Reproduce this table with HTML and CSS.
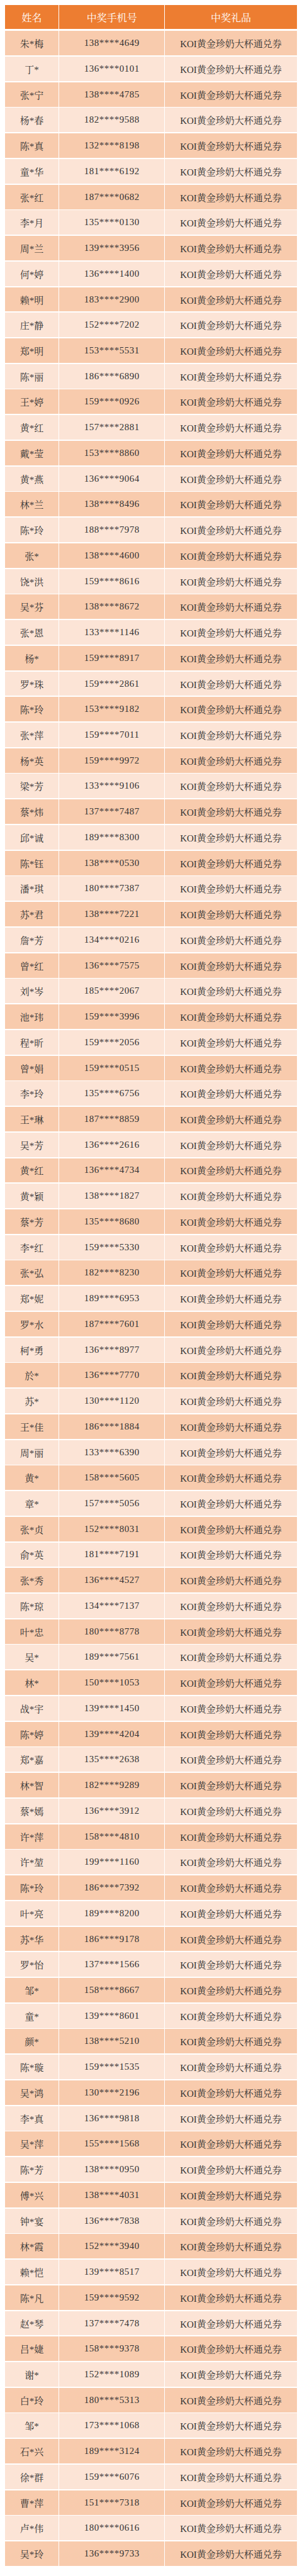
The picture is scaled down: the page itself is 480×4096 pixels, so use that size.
FILE: index.html
```html
<!DOCTYPE html>
<html lang="zh-CN">
<head>
<meta charset="utf-8">
<title>中奖名单</title>
<link rel="stylesheet" href="styles.css">
</head>
<body>
<div class="sheet">
<div class="table">
<div class="head"><div class="cell">姓名</div><div class="cell">中奖手机号</div><div class="cell">中奖礼品</div></div>
<div class="row"><div class="cell name">朱*梅</div><div class="cell phone">138****4649</div><div class="cell gift">KOI黄金珍奶大杯通兑券</div></div>
<div class="row"><div class="cell name">丁*</div><div class="cell phone">136****0101</div><div class="cell gift">KOI黄金珍奶大杯通兑券</div></div>
<div class="row"><div class="cell name">张*宁</div><div class="cell phone">138****4785</div><div class="cell gift">KOI黄金珍奶大杯通兑券</div></div>
<div class="row"><div class="cell name">杨*春</div><div class="cell phone">182****9588</div><div class="cell gift">KOI黄金珍奶大杯通兑券</div></div>
<div class="row"><div class="cell name">陈*真</div><div class="cell phone">132****8198</div><div class="cell gift">KOI黄金珍奶大杯通兑券</div></div>
<div class="row"><div class="cell name">童*华</div><div class="cell phone">181****6192</div><div class="cell gift">KOI黄金珍奶大杯通兑券</div></div>
<div class="row"><div class="cell name">张*红</div><div class="cell phone">187****0682</div><div class="cell gift">KOI黄金珍奶大杯通兑券</div></div>
<div class="row"><div class="cell name">李*月</div><div class="cell phone">135****0130</div><div class="cell gift">KOI黄金珍奶大杯通兑券</div></div>
<div class="row"><div class="cell name">周*兰</div><div class="cell phone">139****3956</div><div class="cell gift">KOI黄金珍奶大杯通兑券</div></div>
<div class="row"><div class="cell name">何*婷</div><div class="cell phone">136****1400</div><div class="cell gift">KOI黄金珍奶大杯通兑券</div></div>
<div class="row"><div class="cell name">赖*明</div><div class="cell phone">183****2900</div><div class="cell gift">KOI黄金珍奶大杯通兑券</div></div>
<div class="row"><div class="cell name">庄*静</div><div class="cell phone">152****7202</div><div class="cell gift">KOI黄金珍奶大杯通兑券</div></div>
<div class="row"><div class="cell name">郑*明</div><div class="cell phone">153****5531</div><div class="cell gift">KOI黄金珍奶大杯通兑券</div></div>
<div class="row"><div class="cell name">陈*丽</div><div class="cell phone">186****6890</div><div class="cell gift">KOI黄金珍奶大杯通兑券</div></div>
<div class="row"><div class="cell name">王*婷</div><div class="cell phone">159****0926</div><div class="cell gift">KOI黄金珍奶大杯通兑券</div></div>
<div class="row"><div class="cell name">黄*红</div><div class="cell phone">157****2881</div><div class="cell gift">KOI黄金珍奶大杯通兑券</div></div>
<div class="row"><div class="cell name">戴*莹</div><div class="cell phone">153****8860</div><div class="cell gift">KOI黄金珍奶大杯通兑券</div></div>
<div class="row"><div class="cell name">黄*燕</div><div class="cell phone">136****9064</div><div class="cell gift">KOI黄金珍奶大杯通兑券</div></div>
<div class="row"><div class="cell name">林*兰</div><div class="cell phone">138****8496</div><div class="cell gift">KOI黄金珍奶大杯通兑券</div></div>
<div class="row"><div class="cell name">陈*玲</div><div class="cell phone">188****7978</div><div class="cell gift">KOI黄金珍奶大杯通兑券</div></div>
<div class="row"><div class="cell name">张*</div><div class="cell phone">138****4600</div><div class="cell gift">KOI黄金珍奶大杯通兑券</div></div>
<div class="row"><div class="cell name">饶*洪</div><div class="cell phone">159****8616</div><div class="cell gift">KOI黄金珍奶大杯通兑券</div></div>
<div class="row"><div class="cell name">吴*芬</div><div class="cell phone">138****8672</div><div class="cell gift">KOI黄金珍奶大杯通兑券</div></div>
<div class="row"><div class="cell name">张*恩</div><div class="cell phone">133****1146</div><div class="cell gift">KOI黄金珍奶大杯通兑券</div></div>
<div class="row"><div class="cell name">杨*</div><div class="cell phone">159****8917</div><div class="cell gift">KOI黄金珍奶大杯通兑券</div></div>
<div class="row"><div class="cell name">罗*珠</div><div class="cell phone">159****2861</div><div class="cell gift">KOI黄金珍奶大杯通兑券</div></div>
<div class="row"><div class="cell name">陈*玲</div><div class="cell phone">153****9182</div><div class="cell gift">KOI黄金珍奶大杯通兑券</div></div>
<div class="row"><div class="cell name">张*萍</div><div class="cell phone">159****7011</div><div class="cell gift">KOI黄金珍奶大杯通兑券</div></div>
<div class="row"><div class="cell name">杨*英</div><div class="cell phone">159****9972</div><div class="cell gift">KOI黄金珍奶大杯通兑券</div></div>
<div class="row"><div class="cell name">梁*芳</div><div class="cell phone">133****9106</div><div class="cell gift">KOI黄金珍奶大杯通兑券</div></div>
<div class="row"><div class="cell name">蔡*炜</div><div class="cell phone">137****7487</div><div class="cell gift">KOI黄金珍奶大杯通兑券</div></div>
<div class="row"><div class="cell name">邱*诚</div><div class="cell phone">189****8300</div><div class="cell gift">KOI黄金珍奶大杯通兑券</div></div>
<div class="row"><div class="cell name">陈*钰</div><div class="cell phone">138****0530</div><div class="cell gift">KOI黄金珍奶大杯通兑券</div></div>
<div class="row"><div class="cell name">潘*琪</div><div class="cell phone">180****7387</div><div class="cell gift">KOI黄金珍奶大杯通兑券</div></div>
<div class="row"><div class="cell name">苏*君</div><div class="cell phone">138****7221</div><div class="cell gift">KOI黄金珍奶大杯通兑券</div></div>
<div class="row"><div class="cell name">詹*芳</div><div class="cell phone">134****0216</div><div class="cell gift">KOI黄金珍奶大杯通兑券</div></div>
<div class="row"><div class="cell name">曾*红</div><div class="cell phone">136****7575</div><div class="cell gift">KOI黄金珍奶大杯通兑券</div></div>
<div class="row"><div class="cell name">刘*岑</div><div class="cell phone">185****2067</div><div class="cell gift">KOI黄金珍奶大杯通兑券</div></div>
<div class="row"><div class="cell name">池*玮</div><div class="cell phone">159****3996</div><div class="cell gift">KOI黄金珍奶大杯通兑券</div></div>
<div class="row"><div class="cell name">程*昕</div><div class="cell phone">159****2056</div><div class="cell gift">KOI黄金珍奶大杯通兑券</div></div>
<div class="row"><div class="cell name">曾*娟</div><div class="cell phone">159****0515</div><div class="cell gift">KOI黄金珍奶大杯通兑券</div></div>
<div class="row"><div class="cell name">李*玲</div><div class="cell phone">135****6756</div><div class="cell gift">KOI黄金珍奶大杯通兑券</div></div>
<div class="row"><div class="cell name">王*琳</div><div class="cell phone">187****8859</div><div class="cell gift">KOI黄金珍奶大杯通兑券</div></div>
<div class="row"><div class="cell name">吴*芳</div><div class="cell phone">136****2616</div><div class="cell gift">KOI黄金珍奶大杯通兑券</div></div>
<div class="row"><div class="cell name">黄*红</div><div class="cell phone">136****4734</div><div class="cell gift">KOI黄金珍奶大杯通兑券</div></div>
<div class="row"><div class="cell name">黄*颖</div><div class="cell phone">138****1827</div><div class="cell gift">KOI黄金珍奶大杯通兑券</div></div>
<div class="row"><div class="cell name">蔡*芳</div><div class="cell phone">135****8680</div><div class="cell gift">KOI黄金珍奶大杯通兑券</div></div>
<div class="row"><div class="cell name">李*红</div><div class="cell phone">159****5330</div><div class="cell gift">KOI黄金珍奶大杯通兑券</div></div>
<div class="row"><div class="cell name">张*弘</div><div class="cell phone">182****8230</div><div class="cell gift">KOI黄金珍奶大杯通兑券</div></div>
<div class="row"><div class="cell name">郑*妮</div><div class="cell phone">189****6953</div><div class="cell gift">KOI黄金珍奶大杯通兑券</div></div>
<div class="row"><div class="cell name">罗*水</div><div class="cell phone">187****7601</div><div class="cell gift">KOI黄金珍奶大杯通兑券</div></div>
<div class="row"><div class="cell name">柯*勇</div><div class="cell phone">136****8977</div><div class="cell gift">KOI黄金珍奶大杯通兑券</div></div>
<div class="row"><div class="cell name">於*</div><div class="cell phone">136****7770</div><div class="cell gift">KOI黄金珍奶大杯通兑券</div></div>
<div class="row"><div class="cell name">苏*</div><div class="cell phone">130****1120</div><div class="cell gift">KOI黄金珍奶大杯通兑券</div></div>
<div class="row"><div class="cell name">王*佳</div><div class="cell phone">186****1884</div><div class="cell gift">KOI黄金珍奶大杯通兑券</div></div>
<div class="row"><div class="cell name">周*丽</div><div class="cell phone">133****6390</div><div class="cell gift">KOI黄金珍奶大杯通兑券</div></div>
<div class="row"><div class="cell name">黄*</div><div class="cell phone">158****5605</div><div class="cell gift">KOI黄金珍奶大杯通兑券</div></div>
<div class="row"><div class="cell name">章*</div><div class="cell phone">157****5056</div><div class="cell gift">KOI黄金珍奶大杯通兑券</div></div>
<div class="row"><div class="cell name">张*贞</div><div class="cell phone">152****8031</div><div class="cell gift">KOI黄金珍奶大杯通兑券</div></div>
<div class="row"><div class="cell name">俞*英</div><div class="cell phone">181****7191</div><div class="cell gift">KOI黄金珍奶大杯通兑券</div></div>
<div class="row"><div class="cell name">张*秀</div><div class="cell phone">136****4527</div><div class="cell gift">KOI黄金珍奶大杯通兑券</div></div>
<div class="row"><div class="cell name">陈*琼</div><div class="cell phone">134****7137</div><div class="cell gift">KOI黄金珍奶大杯通兑券</div></div>
<div class="row"><div class="cell name">叶*忠</div><div class="cell phone">180****8778</div><div class="cell gift">KOI黄金珍奶大杯通兑券</div></div>
<div class="row"><div class="cell name">吴*</div><div class="cell phone">189****7561</div><div class="cell gift">KOI黄金珍奶大杯通兑券</div></div>
<div class="row"><div class="cell name">林*</div><div class="cell phone">150****1053</div><div class="cell gift">KOI黄金珍奶大杯通兑券</div></div>
<div class="row"><div class="cell name">战*宇</div><div class="cell phone">139****1450</div><div class="cell gift">KOI黄金珍奶大杯通兑券</div></div>
<div class="row"><div class="cell name">陈*婷</div><div class="cell phone">139****4204</div><div class="cell gift">KOI黄金珍奶大杯通兑券</div></div>
<div class="row"><div class="cell name">郑*嘉</div><div class="cell phone">135****2638</div><div class="cell gift">KOI黄金珍奶大杯通兑券</div></div>
<div class="row"><div class="cell name">林*智</div><div class="cell phone">182****9289</div><div class="cell gift">KOI黄金珍奶大杯通兑券</div></div>
<div class="row"><div class="cell name">蔡*嫣</div><div class="cell phone">136****3912</div><div class="cell gift">KOI黄金珍奶大杯通兑券</div></div>
<div class="row"><div class="cell name">许*萍</div><div class="cell phone">158****4810</div><div class="cell gift">KOI黄金珍奶大杯通兑券</div></div>
<div class="row"><div class="cell name">许*堃</div><div class="cell phone">199****1160</div><div class="cell gift">KOI黄金珍奶大杯通兑券</div></div>
<div class="row"><div class="cell name">陈*玲</div><div class="cell phone">186****7392</div><div class="cell gift">KOI黄金珍奶大杯通兑券</div></div>
<div class="row"><div class="cell name">叶*亮</div><div class="cell phone">189****8200</div><div class="cell gift">KOI黄金珍奶大杯通兑券</div></div>
<div class="row"><div class="cell name">苏*华</div><div class="cell phone">186****9178</div><div class="cell gift">KOI黄金珍奶大杯通兑券</div></div>
<div class="row"><div class="cell name">罗*怡</div><div class="cell phone">137****1566</div><div class="cell gift">KOI黄金珍奶大杯通兑券</div></div>
<div class="row"><div class="cell name">邹*</div><div class="cell phone">158****8667</div><div class="cell gift">KOI黄金珍奶大杯通兑券</div></div>
<div class="row"><div class="cell name">童*</div><div class="cell phone">139****8601</div><div class="cell gift">KOI黄金珍奶大杯通兑券</div></div>
<div class="row"><div class="cell name">颜*</div><div class="cell phone">138****5210</div><div class="cell gift">KOI黄金珍奶大杯通兑券</div></div>
<div class="row"><div class="cell name">陈*璇</div><div class="cell phone">159****1535</div><div class="cell gift">KOI黄金珍奶大杯通兑券</div></div>
<div class="row"><div class="cell name">吴*鸿</div><div class="cell phone">130****2196</div><div class="cell gift">KOI黄金珍奶大杯通兑券</div></div>
<div class="row"><div class="cell name">李*真</div><div class="cell phone">136****9818</div><div class="cell gift">KOI黄金珍奶大杯通兑券</div></div>
<div class="row"><div class="cell name">吴*萍</div><div class="cell phone">155****1568</div><div class="cell gift">KOI黄金珍奶大杯通兑券</div></div>
<div class="row"><div class="cell name">陈*芳</div><div class="cell phone">138****0950</div><div class="cell gift">KOI黄金珍奶大杯通兑券</div></div>
<div class="row"><div class="cell name">傅*兴</div><div class="cell phone">138****4031</div><div class="cell gift">KOI黄金珍奶大杯通兑券</div></div>
<div class="row"><div class="cell name">钟*宴</div><div class="cell phone">136****7838</div><div class="cell gift">KOI黄金珍奶大杯通兑券</div></div>
<div class="row"><div class="cell name">林*霞</div><div class="cell phone">152****3940</div><div class="cell gift">KOI黄金珍奶大杯通兑券</div></div>
<div class="row"><div class="cell name">赖*恺</div><div class="cell phone">139****8517</div><div class="cell gift">KOI黄金珍奶大杯通兑券</div></div>
<div class="row"><div class="cell name">陈*凡</div><div class="cell phone">159****9592</div><div class="cell gift">KOI黄金珍奶大杯通兑券</div></div>
<div class="row"><div class="cell name">赵*琴</div><div class="cell phone">137****7478</div><div class="cell gift">KOI黄金珍奶大杯通兑券</div></div>
<div class="row"><div class="cell name">吕*婕</div><div class="cell phone">158****9378</div><div class="cell gift">KOI黄金珍奶大杯通兑券</div></div>
<div class="row"><div class="cell name">谢*</div><div class="cell phone">152****1089</div><div class="cell gift">KOI黄金珍奶大杯通兑券</div></div>
<div class="row"><div class="cell name">白*玲</div><div class="cell phone">180****5313</div><div class="cell gift">KOI黄金珍奶大杯通兑券</div></div>
<div class="row"><div class="cell name">邹*</div><div class="cell phone">173****1068</div><div class="cell gift">KOI黄金珍奶大杯通兑券</div></div>
<div class="row"><div class="cell name">石*兴</div><div class="cell phone">189****3124</div><div class="cell gift">KOI黄金珍奶大杯通兑券</div></div>
<div class="row"><div class="cell name">徐*群</div><div class="cell phone">159****6076</div><div class="cell gift">KOI黄金珍奶大杯通兑券</div></div>
<div class="row"><div class="cell name">曹*萍</div><div class="cell phone">151****7318</div><div class="cell gift">KOI黄金珍奶大杯通兑券</div></div>
<div class="row"><div class="cell name">卢*伟</div><div class="cell phone">180****0616</div><div class="cell gift">KOI黄金珍奶大杯通兑券</div></div>
<div class="row"><div class="cell name">吴*玲</div><div class="cell phone">136****9733</div><div class="cell gift">KOI黄金珍奶大杯通兑券</div></div>
</div>
</div>
</body>
</html>
```

FILE: styles.css
```css
html, body {
  margin: 0;
  padding: 0;
  background: #ffffff;
}

.sheet {
  padding: 7.6px 0 0 7.6px;
}

.table {
  width: 464px;
  display: flex;
  flex-direction: column;
  gap: 1.8px;
  font-family: "Liberation Serif", "Noto Serif CJK SC", "Noto Sans CJK SC", serif;
}

.head,
.row {
  display: grid;
  grid-template-columns: 85.6px 166.8px 1fr;
  column-gap: 1.2px;
}

.head {
  height: 38.3px;
  margin-bottom: 1.5px;
}

.row {
  height: 38.95px;
}

.cell {
  display: flex;
  align-items: center;
  justify-content: center;
  white-space: nowrap;
}

.head .cell {
  background: #ed7d31;
  color: #ffffff;
  font-size: 16px;
  padding-top: 2px;
}

.row .cell {
  color: #333333;
  font-size: 15px;
}

.row:nth-child(even) .cell {
  background: #f8cbad;
}

.row:nth-child(odd) .cell {
  background: #fce4d6;
}

.phone {
  letter-spacing: 0.5px;
}
```
